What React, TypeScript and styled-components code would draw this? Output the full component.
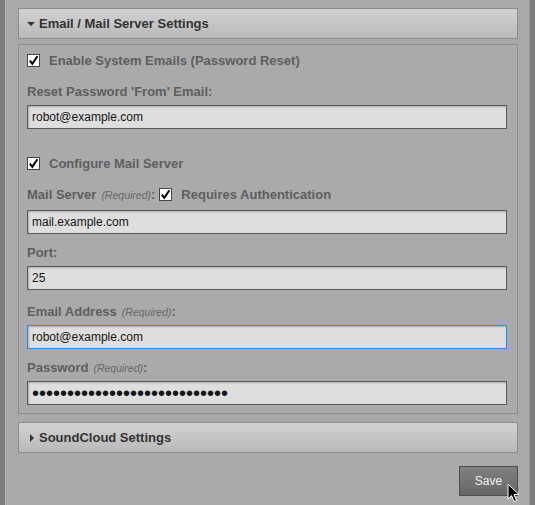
import React from "react";
import styled, { createGlobalStyle } from "styled-components";

const GlobalStyle = createGlobalStyle`
  html, body {
    margin: 0;
    padding: 0;
    background: #7d7d7d;
    font-family: "Liberation Sans", Arial, sans-serif;
  }
`;

const Page = styled.div`
  display: flex;
  min-height: 100vh;
`;

const Frame = styled.div`
  margin-left: 5px;
  width: 525px;
  min-height: 505px;
  box-sizing: border-box;
  border-left: 1px solid #b2b2b2;
  border-right: 1px solid #9c9c9c;
  background: #a9a9a9;
  padding: 8px 11px 0 12px;
`;

const SectionHeader = styled.div<{ $gap?: number }>`
  height: 31px;
  box-sizing: border-box;
  margin-top: ${(p) => p.$gap ?? 0}px;
  border: 1px solid #8c8c8c;
  background: linear-gradient(#d2d2d2, #b9b9b9);
  display: flex;
  align-items: center;
  padding-left: 8px;
  font-size: 13px;
  font-weight: bold;
  color: #333;
`;

const Arrow = styled.span<{ $open: boolean }>`
  width: 7px;
  margin-right: 5px;
  display: flex;
  justify-content: center;
  &::before {
    content: "";
    display: block;
    ${(p) =>
      p.$open
        ? "border-left: 4px solid transparent; border-right: 4px solid transparent; border-top: 4px solid #333;"
        : "border-top: 4px solid transparent; border-bottom: 4px solid transparent; border-left: 4px solid #333; margin-left: 2px;"}
  }
`;

const Panel = styled.div`
  margin-top: 5px;
  border: 1px solid #8d8d8d;
  background: #aaaaaa;
  padding: 7px 10px 8px 8px;
`;

const CheckRow = styled.div<{ $top?: number; $bottom?: number }>`
  display: flex;
  align-items: center;
  height: 16px;
  margin-top: ${(p) => p.$top ?? 0}px;
  margin-bottom: ${(p) => p.$bottom ?? 0}px;
  font-size: 13px;
  font-weight: bold;
  color: #5e5e5e;
`;

const Box = styled.span`
  width: 13px;
  height: 13px;
  box-sizing: border-box;
  border: 1px solid #454545;
  background: #fff;
  display: inline-flex;
  align-items: center;
  justify-content: center;
  flex-shrink: 0;
  margin-right: 9px;
`;

const Field = styled.div<{ $top?: number }>`
  margin-top: ${(p) => p.$top ?? 10}px;
`;

const Label = styled.div<{ $tall?: boolean }>`
  display: flex;
  align-items: center;
  height: ${(p) => (p.$tall ? 19 : 17)}px;
  margin-bottom: ${(p) => (p.$tall ? 6 : 5)}px;
  font-size: 13px;
  font-weight: bold;
  color: #5e5e5e;
`;

const Hint = styled.span`
  font-size: 10.5px;
  font-style: italic;
  font-weight: normal;
  color: #676767;
  margin-left: 5px;
`;

const Colon = styled.span`
  margin-right: 4px;
`;

const TextInput = styled.input<{ $focused?: boolean }>`
  display: block;
  width: 100%;
  height: 24px;
  box-sizing: border-box;
  margin: 0;
  padding: 0 4px;
  border: 1px solid ${(p) => (p.$focused ? "#2f8ae4" : "#5a5a5a")};
  background: #dedede;
  box-shadow: inset 1px 1px 2px rgba(0, 0, 0, 0.22);
  font-family: "Liberation Sans", Arial, sans-serif;
  font-size: 12px;
  color: #151515;
  caret-color: #000;
  outline: none;
  &[type="password"] {
    font-size: 20px;
  }
`;

const Footer = styled.div`
  display: flex;
  justify-content: flex-end;
  margin-top: 13px;
`;

const ButtonWrap = styled.div`
  position: relative;
`;

const SaveButton = styled.button`
  width: 59px;
  height: 30px;
  box-sizing: border-box;
  border: 1px solid #4e4e4e;
  background: linear-gradient(#808080, #676767);
  color: #f0f0f0;
  font-family: "Liberation Sans", Arial, sans-serif;
  font-size: 12px;
  padding: 0;
`;

const Pointer = styled.svg`
  position: absolute;
  left: 48px;
  top: 17px;
  pointer-events: none;
`;

const Check = () => (
  <Box>
    <svg width="11" height="11" viewBox="0 0 11 11">
      <path d="M1.8 5.6 L4.3 8.8 L9.4 1.2" fill="none" stroke="#000" strokeWidth="2" />
    </svg>
  </Box>
);

const App = () => {
  // put the caret after the text, as in a field that was just clicked
  const toEnd = (e: React.FocusEvent<HTMLInputElement>) => {
    const len = e.target.value.length;
    e.target.setSelectionRange(len, len);
  };

  return (
    <Page>
      <GlobalStyle />
      <Frame>
        <SectionHeader>
          <Arrow $open />
          Email / Mail Server Settings
        </SectionHeader>
        <Panel>
          <CheckRow $bottom={15}>
            <Check />
            Enable System Emails (Password Reset)
          </CheckRow>
          <Field $top={0}>
            <Label>Reset Password 'From' Email:</Label>
            <TextInput readOnly value="robot@example.com" />
          </Field>
          <CheckRow $top={26}>
            <Check />
            Configure Mail Server
          </CheckRow>
          <Field $top={14}>
            <Label $tall>
              Mail Server<Hint>(Required)</Hint>
              <Colon>:</Colon>
              <Check />
              Requires Authentication
            </Label>
            <TextInput readOnly value="mail.example.com" />
          </Field>
          <Field>
            <Label>Port:</Label>
            <TextInput readOnly value="25" />
          </Field>
          <Field $top={13}>
            <Label>
              Email Address<Hint>(Required)</Hint>:
            </Label>
            <TextInput $focused autoFocus onFocus={toEnd} defaultValue="robot@example.com" />
          </Field>
          <Field>
            <Label>
              Password<Hint>(Required)</Hint>:
            </Label>
            <TextInput readOnly type="password" value="xxxxxxxxxxxxxxxxxxxxxxxxxxxx" />
          </Field>
        </Panel>
        <SectionHeader $gap={8}>
          <Arrow $open={false} />
          SoundCloud Settings
        </SectionHeader>
        <Footer>
          <ButtonWrap>
            <SaveButton>Save</SaveButton>
            <Pointer width="13" height="20" viewBox="0 0 13 20">
              <path
                d="M1 1 L1 16 L4.5 12.5 L7 18.5 L9.5 17.5 L7 11.5 L12 11.5 Z"
                fill="#000"
                stroke="#fff"
                strokeWidth="1"
                strokeLinejoin="round"
              />
            </Pointer>
          </ButtonWrap>
        </Footer>
      </Frame>
    </Page>
  );
};

export default App;
